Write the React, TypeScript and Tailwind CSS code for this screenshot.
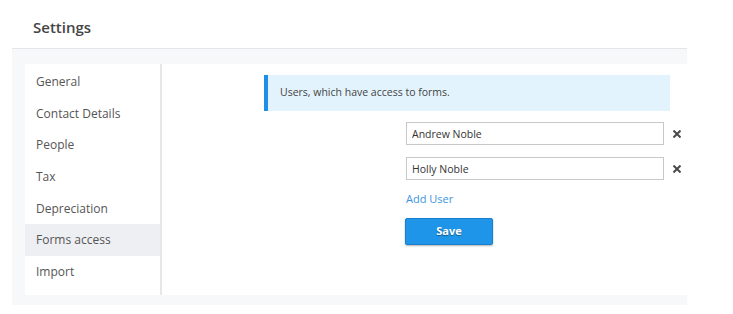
import { useState } from 'react';

const navItems = ['General', 'Contact Details', 'People', 'Tax', 'Depreciation', 'Forms access', 'Import'];

function RemoveIcon() {
  return (
    <svg width="8" height="8" viewBox="0 0 8 8" className="text-[#4a4a4a]">
      <path d="M1.2 1.2 L6.8 6.8 M6.8 1.2 L1.2 6.8" stroke="currentColor" strokeWidth="2" strokeLinecap="square" />
    </svg>
  );
}

export default function App() {
  const [users] = useState(['Andrew Noble', 'Holly Noble']);
  const active = 'Forms access';

  return (
    <div className="h-[314px] w-[733px] bg-white font-['Open_Sans',sans-serif] text-[#444]">
      <div className="flex h-[48px] items-center pt-[6px] pl-[33px]">
        <h1 className="text-[15px] font-semibold text-[#454545]">Settings</h1>
      </div>

      <div className="ml-[12px] w-[675px] border-t border-[#e4e5e8] bg-[#f7f8fa] pt-[15px] pb-[10px] pl-[13px]">
        <div className="flex h-[231px] bg-white">
          <nav className="w-[137px] shrink-0 border-r-2 border-[#e6e7ea] pt-[2px]">
            {navItems.map((item) => (
              <div
                key={item}
                className={`flex h-[31.7px] items-center pl-[11px] text-[12px] text-[#555] ${
                  item === active ? 'bg-[#eeeff3]' : ''
                }`}
              >
                {item}
              </div>
            ))}
          </nav>

          <div className="flex-1 pt-[11px] pl-[102px]">
            <div className="flex h-[36px] w-[406px] items-center border-l-4 border-[#1e8fe6] bg-[#e3f3fd] pl-[12px] text-[10.5px] text-[#444]">
              Users, which have access to forms.
            </div>

            <div className="mt-[11px] pl-[142px]">
              {users.map((u) => (
                <div key={u} className="mb-[12px] flex items-center gap-[9px]">
                  <input
                    readOnly
                    value={u}
                    className="h-[23px] w-[258px] border border-[#c8c8c8] px-[5px] text-[10.5px] text-[#333] outline-none"
                  />
                  <RemoveIcon />
                </div>
              ))}
              <div className="-mt-[1px] text-[11px] text-[#3d95e0]">Add User</div>
              <button className="mt-[10px] -ml-px h-[27px] w-[88px] rounded-[2px] border border-[#1a7fcf] bg-[#1e95e8] text-[11px] font-bold text-white shadow-[0_1px_2px_rgba(0,0,0,0.3)] [text-shadow:0_1px_1px_rgba(0,0,0,0.4)]">
                Save
              </button>
            </div>
          </div>
        </div>
      </div>
    </div>
  );
}
